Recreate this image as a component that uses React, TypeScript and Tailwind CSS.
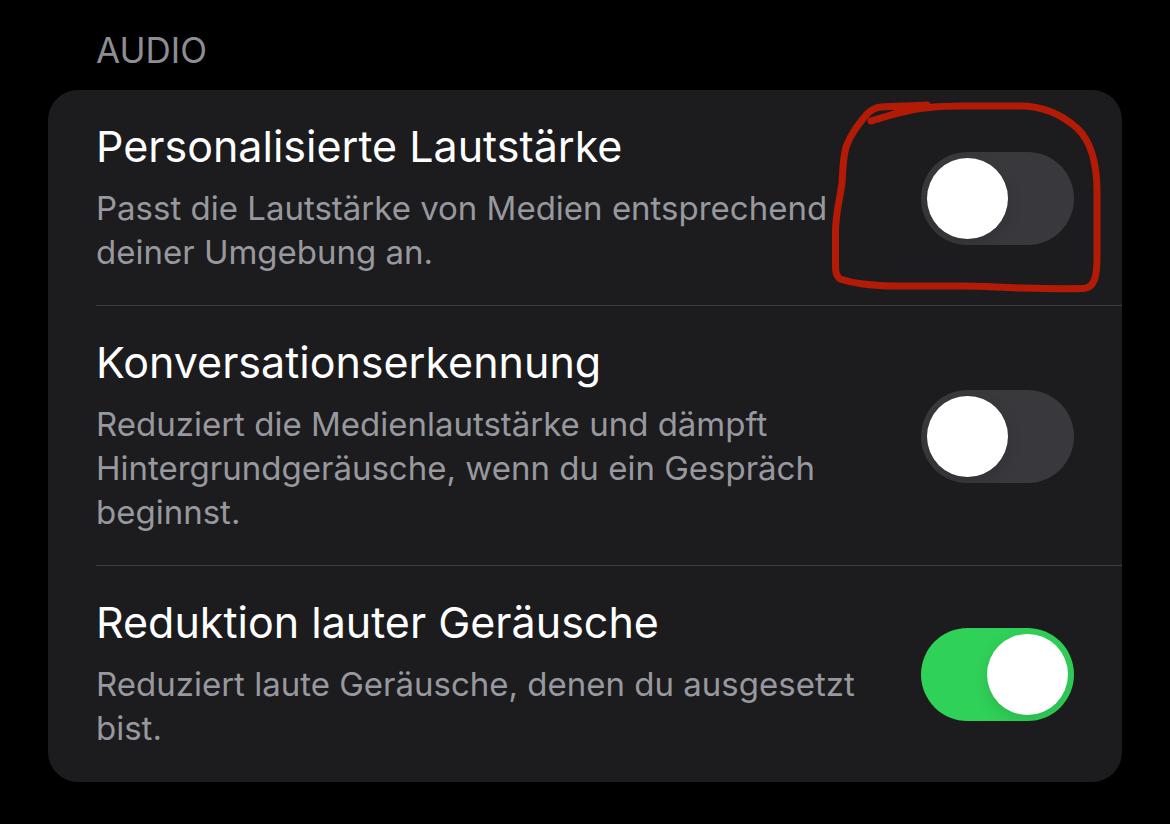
import { useState } from "react";

type Setting = { id: string; title: string; description: string; enabled: boolean; marked?: boolean };

const settings: Setting[] = [
  {
    id: "volume",
    title: "Personalisierte Lautstärke",
    description: "Passt die Lautstärke von Medien entsprechend deiner Umgebung an.",
    enabled: false,
    marked: true,
  },
  {
    id: "conversation",
    title: "Konversationserkennung",
    description: "Reduziert die Medienlautstärke und dämpft Hintergrundgeräusche, wenn du ein Gespräch beginnst.",
    enabled: false,
  },
  {
    id: "reduction",
    title: "Reduktion lauter Geräusche",
    description: "Reduziert laute Geräusche, denen du ausgesetzt bist.",
    enabled: true,
  },
];

function Marker() {
  return (
    <svg
      className="pointer-events-none absolute -top-[54px] -left-[91px] h-[200px] w-[280px] max-w-none"
      viewBox="830 98 280 200"
      fill="none"
      stroke="#b31b06"
      strokeWidth="7"
      strokeLinecap="round"
      strokeLinejoin="round"
      aria-hidden="true"
    >
      <path d="M871 121C882 118 892 114 903 112C922 107 940 106 963 106H1020C1042 106 1060 113 1077 128C1092 142 1097 168 1097 192V256C1097 276 1095 288 1083 288.5C1062 289 1041 288.5 1020 288C1000 287.500 982 286 963 286H893C881 286 872 285 863 284C854 283 846 281 840 279C836 276 835.500 272 835.500 266V230C836 212 840 198 842 183C843 167 843 158 846 147C851 133 859 124 867 114C872 109 876 107.500 881 107C896 106 914 106 927 105" />
    </svg>
  );
}

function Row({ setting, last }: { setting: Setting; last: boolean }) {
  const [on, setOn] = useState(setting.enabled);
  return (
    <li
      className={
        last
          ? "flex items-center gap-3 py-8 pr-12"
          : "flex items-center gap-3 py-8 pr-12 shadow-[inset_0_-1px_0_#3d3d40]"
      }
    >
      <label htmlFor={setting.id} className="min-w-0 flex-1">
        <span className="block text-[43px] leading-[48px] text-white">{setting.title}</span>
        <span className="mt-4 block max-w-[780px] text-[33px] leading-[44px] text-[#98989f]">{setting.description}</span>
      </label>
      <span className="relative h-[93px] w-[153px] shrink-0">
        <input
          id={setting.id}
          type="checkbox"
          role="switch"
          checked={on}
          onChange={() => setOn(!on)}
          className="peer block h-full w-full cursor-pointer appearance-none rounded-full bg-[#39393d] checked:bg-[#30d158]"
        />
        <span className="pointer-events-none absolute inset-0 overflow-hidden rounded-full peer-checked:[&>span]:left-[66px]">
          <span className="absolute top-1.5 left-1.5 size-[81px] rounded-full bg-white shadow-[0_6px_16px_rgba(0,0,0,0.12)]" />
        </span>
        {setting.marked && <Marker />}
      </span>
    </li>
  );
}

export default function App() {
  return (
    <main className="min-h-screen bg-black px-12 pt-8 pb-10 font-['Inter',sans-serif]">
      <h1 className="pl-12 text-[35px] leading-[36px] text-[#8d8d93]">AUDIO</h1>
      <ul className="mt-[22px] rounded-[30px] bg-[#1c1c1e] pl-12">
        {settings.map((setting, index) => (
          <Row key={setting.id} setting={setting} last={index === settings.length - 1} />
        ))}
      </ul>
    </main>
  );
}
